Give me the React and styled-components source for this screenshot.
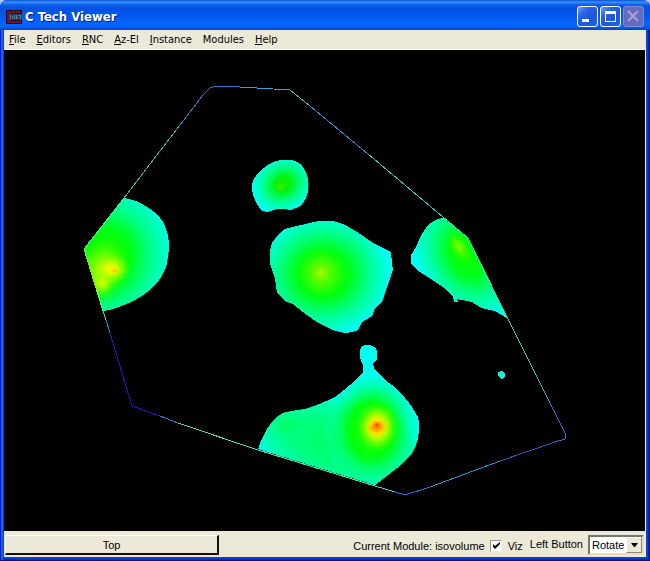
import React from "react";
import styled, { createGlobalStyle } from "styled-components";

const Global = createGlobalStyle`
  *, *::before, *::after { box-sizing: border-box; }
  html, body, #root { height: 100%; }
  body { margin: 0; background: #b4c4e6; overflow: hidden; }
`;

const Window = styled.div`
  display: flex;
  flex-direction: column;
  height: 100%;
  padding: 0 4px 4px;
  border-radius: 8px 8px 0 0;
  overflow: hidden;
  background: #0a3fd8;
  box-shadow: inset 1px 0 #0019cf, inset -1px -1px #001590, inset 3px 0 #1660ee, inset -2px -2px #0526b8;
`;

const TitleBar = styled.header`
  display: flex;
  align-items: center;
  gap: 3px;
  flex: 0 0 30px;
  margin: 0 -4px;
  padding: 3px 6px 0;
  background: linear-gradient(#0850d0 0, #3a8ffb 2px, #0a5cea 5px, #0352e0 9px, #0358ec 16px, #0466ff 24px, #0560f6 27px, #0340c6 30px);
`;

const Title = styled.h1`
  flex: 1;
  margin: 0;
  color: #fff;
  font: bold 13px/16px "DejaVu Sans Condensed", "Noto Sans", sans-serif;
  text-shadow: 1px 1px #0a1883;
`;

const CaptionButtons = styled.div`
  display: flex;
  gap: 2px;
`;

const CaptionButton = styled.button`
  display: flex;
  width: 21px;
  height: 21px;
  padding: 0;
  align-items: center;
  justify-content: center;
  color: #fff;
  border: 1px solid #fff;
  border-radius: 3px;
  background: linear-gradient(135deg, #6d9cf8 0, #2b62e4 30%, #1c55dc 65%, #1a6af0 100%);
  &:disabled {
    color: #a4a2d4;
    border-color: #7e8bd6;
    background: #646cc0;
  }
`;

const MenuBar = styled.nav`
  display: flex;
  flex: 0 0 20px;
  gap: 11px;
  padding: 0 5px;
  background: #ece9d8;
  border-bottom: 1px solid #fff;
`;

const MenuButton = styled.button`
  padding: 0;
  border: 0;
  background: none;
  color: #000;
  font: 11px/18px "DejaVu Sans Condensed", "Noto Sans", sans-serif;
`;

const Viewport = styled.main`
  display: flex;
  flex: 1;
  min-height: 0;
  background: #000;
  border-right: 1px solid #ece9d8;
`;

const Plot = styled.svg`
  width: 100%;
  height: 100%;
`;

const StatusBar = styled.footer`
  display: flex;
  align-items: center;
  flex: 0 0 26px;
  padding: 0 2px 0 1px;
  background: #ece9d8;
  color: #000;
  font: 11px/14px "Liberation Sans", Arial, sans-serif;
`;

const ViewButton = styled.button`
  flex: 0 1 214px;
  height: 20px;
  margin-top: 2px;
  padding: 0;
  background: #ece9d8;
  color: #000;
  border: solid;
  border-width: 1px 2px 2px 1px;
  border-color: #fff #111 #111 #fff;
  font: inherit;
`;

const ModuleInfo = styled.div`
  display: flex;
  align-items: center;
  gap: 5px;
  margin: 3px 7px 0 auto;
`;

const VizLabel = styled.label`
  display: flex;
  align-items: center;
  gap: 6px;
`;

const CheckWrap = styled.span`
  display: grid;
  width: 12px;
  height: 12px;
  & > * { grid-area: 1 / 1; }
  svg { pointer-events: none; }
`;

const CheckBox = styled.input`
  appearance: none;
  width: 12px;
  height: 12px;
  margin: 0;
  background: #fff;
  border: 1px solid;
  border-color: #999688 #f4f2e8 #f4f2e8 #999688;
  &:not(:checked) + svg { visibility: hidden; }
`;

const ActionLabel = styled.label`
  margin-right: 5px;
`;

const SelectFrame = styled.div`
  display: grid;
  grid-template-columns: 1fr 16px;
  width: 56px;
  height: 20px;
  margin-top: 1px;
  border: 2px solid;
  border-color: #77756a #e2dfce #e2dfce #77756a;
  background: #fff;
`;

const ActionSelect = styled.select`
  grid-area: 1 / 1 / 2 / 3;
  appearance: none;
  width: 100%;
  height: 16px;
  padding: 0 16px 0 2px;
  border: 0;
  background: transparent;
  color: #000;
  font: inherit;
`;

const SelectArrow = styled.span`
  grid-area: 1 / 2;
  display: grid;
  place-items: center;
  pointer-events: none;
  background: #ece9d8;
  border: 1px solid;
  border-color: #fff #8a877a #8a877a #fff;
`;

const menus = [
  ["File", true],
  ["Editors", true],
  ["RNC", true],
  ["Az-El", true],
  ["Instance", true],
  ["Modules", false],
  ["Help", true],
];

const edges = [
  ["84,249 124,198", "#48e890"],
  ["124,198 150,164", "#38b878"],
  ["150,164 180,125", "#36b4a4"],
  ["180,125 203,95 210,88", "#2878c4"],
  ["210,88 216,86 240,87", "#2474d0"],
  ["240,87 290,90", "#2ca8d8"],
  ["290,90 310,106", "#38c0c0"],
  ["310,106 368,154", "#3888cc"],
  ["368,154 443,217", "#38c0c0"],
  ["443,217 468,238 508,319", "#30e0a0"],
  ["508,319 535,373", "#48d0a0"],
  ["535,373 550,403", "#38b0c8"],
  ["550,403 565,433 565,439 555,442", "#3870d0"],
  ["555,442 500,461", "#2458b8"],
  ["500,461 430,487", "#3090c8"],
  ["430,487 405,495 395,492", "#2878d0"],
  ["395,492 375,486", "#48c8c8"],
  ["375,486 258,450", "#30e8a0"],
  ["258,450 178,423", "#48d8a8"],
  ["178,423 160,416", "#3078d0"],
  ["160,416 132,406 110,333", "#1c1cc0"],
  ["110,333 106,320", "#2888d8"],
  ["106,320 103,311", "#38d8c0"],
  ["103,311 84,249", "#70f050"],
];

const plumes = [
  {
    id: "west",
    d: "M84 249L124 198Q134 200 140 203Q156 211 163 222Q169 234 169 247Q168 259 166 267Q162 277 155 285Q148 292 140 297Q131 303 121 306Q112 310 103 311Z",
    heat: [
      { cx: 104, cy: 258, rx: 67, ry: 74, rotate: 28, stops: [[0, "#20ff00"], [0.38, "#00ff10"], [0.65, "#00ff80"], [1, "#00ffe8"]] },
      { cx: 101, cy: 270, rx: 28, ry: 38, rotate: 25, stops: [[0, "#b0ff00"], [0.5, "#60ff00", 0.8], [1, "#00ff00", 0]] },
      { cx: 111, cy: 269, rx: 20, ry: 16, stops: [[0, "#f8f800"], [0.3, "#e0ff00", 0.9], [1, "#80ff00", 0]] },
      { cx: 115, cy: 271, rx: 6, ry: 4, stops: [[0, "#ffb800"], [1, "#fff000", 0]] },
      { cx: 102, cy: 283, rx: 12, ry: 12, stops: [[0, "#e0ff00"], [1, "#a0ff00", 0]] },
    ],
  },
  {
    id: "north",
    d: "M252 190Q252 182 254 179Q259 171 268 165Q276 160 284 160H292Q299 162 302 166Q307 173 308 180Q309 190 307 195Q304 203 300 206Q294 209 290 210Q283 208 277 209L267 212Q262 211 260 209Q253 198 252 190Z",
    heat: [
      { cx: 283, cy: 184, rx: 33, ry: 29, rotate: -30, stops: [[0, "#18f000"], [0.25, "#00f414"], [0.6, "#00ff90"], [0.94, "#00fff0"]] },
      { cx: 280, cy: 187, rx: 6, ry: 6, stops: [[0, "#50e800"], [1, "#20f000", 0]] },
    ],
  },
  {
    id: "center",
    d: "M270 263L270 251L272 243L279 234L285 229L293 227L310 223L319 221H333L345 225L357 232L373 243L391 252L392 263L393 270L387 287L382 302L375 308L372 316L362 322L358 330L353 332L345 333L333 330L317 322L303 312L293 304L285 301L277 292L275 278Z",
    heat: [
      { cx: 323, cy: 274, rx: 68, ry: 62, stops: [[0, "#40ff00"], [0.37, "#00ff10"], [0.64, "#00ff80"], [0.97, "#00fff0"]] },
      { cx: 321, cy: 273, rx: 24, ry: 25, stops: [[0, "#a8f800"], [0.3, "#70f800", 0.8], [1, "#20ff00", 0]] },
    ],
  },
  {
    id: "east",
    d: "M443 218L468 238L508 319Q501 314 495 311L482 308L472 302L463 300L457 299L458 302L454 302L453 296Q447 290 443 287Q430 278 420 272L411 264V255Q415 249 417 245Q420 236 426 228Q433 219 443 218Z",
    heat: [
      { cx: 466, cy: 256, rx: 47, ry: 66, rotate: -30, stops: [[0, "#10ff00"], [0.32, "#00ff18"], [0.65, "#00ff90"], [1, "#00fff0"]] },
      { cx: 459, cy: 247, rx: 10, ry: 18, rotate: -32, stops: [[0, "#98f800"], [0.4, "#60f800", 0.7], [1, "#20ff00", 0]] },
    ],
  },
  {
    id: "south",
    d: "M258 449Q260 442 263 437Q267 428 272 422Q277 416 283 413Q290 411 305 409Q311 407 317 405Q327 401 335 397Q343 391 350 385L363 373V365Q359 359 360 350Q361 345 367 345Q375 345 377 351V359L373 364L375 370L385 380Q394 386 400 392Q407 400 412 407L418 417Q420 427 418 438Q416 447 412 453Q405 462 397 468L375 485Z",
    heat: [
      { cx: 340, cy: 444, rx: 100, ry: 50, rotate: 14, stops: [[0, "#00ff60"], [0.5, "#00ff80"], [0.78, "#00ffa8", 0.8], [1, "#00fff0", 0]] },
      { cx: 287, cy: 425, rx: 24, ry: 20, stops: [[0, "#00ff58"], [1, "#00ff90", 0]] },
      { cx: 372, cy: 430, rx: 50, ry: 60, stops: [[0, "#20ff00"], [0.46, "#00ff10"], [0.65, "#00ff60", 0.75], [1, "#00ffe0", 0]] },
      { cx: 377, cy: 427, rx: 22, ry: 26, stops: [[0, "#ffd000"], [0.25, "#fff000"], [0.5, "#c0ff00", 0.8], [1, "#30ff00", 0]] },
      { cx: 377, cy: 427, rx: 12, ry: 9, rotate: -12, stops: [[0, "#ff8000"], [0.4, "#ffa000", 0.8], [1, "#ffe000", 0]] },
      { cx: 377, cy: 425, rx: 4, ry: 4, stops: [[0, "#ff3000"], [1, "#ff8000", 0]] },
    ],
  },
];

function Plume({ id, d, heat }) {
  return (
    <g>
      <clipPath id={`${id}-clip`}>
        <path d={d} />
      </clipPath>
      <path d={d} fill="#00fff0" shapeRendering="crispEdges" />
      <g clipPath={`url(#${id}-clip)`}>
        {heat.map((h, i) => (
          <g key={i}>
            <radialGradient id={`${id}-${i}`}>
              {h.stops.map(([offset, color, opacity = 1]) => (
                <stop key={offset} offset={offset} stopColor={color} stopOpacity={opacity} />
              ))}
            </radialGradient>
            <ellipse
              cx={h.cx}
              cy={h.cy}
              rx={h.rx}
              ry={h.ry}
              fill={`url(#${id}-${i})`}
              transform={h.rotate ? `rotate(${h.rotate} ${h.cx} ${h.cy})` : undefined}
            />
          </g>
        ))}
      </g>
    </g>
  );
}

function AppIcon() {
  return (
    <svg width="16" height="16" viewBox="0 0 16 16" shapeRendering="crispEdges" aria-hidden="true">
      <path d="M0 1h16v14H0z" fill="#250c24" />
      <path d="M1 2h14v2H4v8h11v2H1z" fill="#7b1025" />
      <path d="M3 5h13v6H3z" fill="#23405e" />
      <path d="M4 10V6M6 7v3M8 6v4M10 6v4M10 8h2M14 10V7M12 6h3" fill="none" stroke="#4e7b90" />
    </svg>
  );
}

export default function App() {
  return (
    <>
      <Global />
      <Window>
        <TitleBar>
          <AppIcon />
          <Title>C Tech Viewer</Title>
          <CaptionButtons>
            <CaptionButton aria-label="Minimize">
              <svg width="19" height="19"><path d="M4 12h7v3H4z" fill="currentColor" /></svg>
            </CaptionButton>
            <CaptionButton aria-label="Maximize">
              <svg width="19" height="19"><path fillRule="evenodd" d="M4 4h11v11H4zM5 7v7h9V7z" fill="currentColor" /></svg>
            </CaptionButton>
            <CaptionButton aria-label="Close" disabled>
              <svg width="19" height="19"><path d="M4 4l10 10M14 4L4 14" stroke="currentColor" strokeWidth="2" /></svg>
            </CaptionButton>
          </CaptionButtons>
        </TitleBar>
        <MenuBar>
          {menus.map(([name, key]) => (
            <MenuButton key={name}>{key ? <><u>{name[0]}</u>{name.slice(1)}</> : name}</MenuButton>
          ))}
        </MenuBar>
        <Viewport>
          <Plot viewBox="4 50 641 481" role="img" aria-label="Isovolume plot">
            {plumes.map((p) => <Plume key={p.id} {...p} />)}
            <path d="M498 372l4-1 3 3v3l-3 2-4-3z" fill="#10f0d8" shapeRendering="crispEdges" />
            {edges.map(([points, color]) => (
              <polyline key={points} points={points} fill="none" stroke={color} shapeRendering="crispEdges" />
            ))}
          </Plot>
        </Viewport>
        <StatusBar>
          <ViewButton>Top</ViewButton>
          <ModuleInfo>
            <span>Current Module: isovolume</span>
            <VizLabel>
              <CheckWrap>
                <CheckBox type="checkbox" defaultChecked />
                <svg width="12" height="12" viewBox="0 0 12 12"><path d="M3 4v3l2 2 5-5V2L5 6z" fill="#000" /></svg>
              </CheckWrap>
              Viz
            </VizLabel>
          </ModuleInfo>
          <ActionLabel htmlFor="left-button">Left Button</ActionLabel>
          <SelectFrame>
            <ActionSelect id="left-button" defaultValue="Rotate">
              <option>Rotate</option>
            </ActionSelect>
            <SelectArrow>
              <svg width="7" height="4"><path d="M0 0h7L4 4H3z" fill="#000" /></svg>
            </SelectArrow>
          </SelectFrame>
        </StatusBar>
      </Window>
    </>
  );
}
